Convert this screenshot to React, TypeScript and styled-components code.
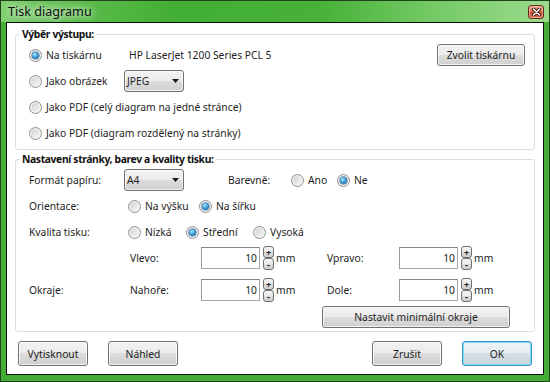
import React from 'react'
import styled, { createGlobalStyle } from 'styled-components'

const GlobalStyle = createGlobalStyle`
  html, body {
    margin: 0;
    padding: 0;
    background: #ffffff;
  }
  body {
    font-family: 'Noto Sans', 'Open Sans', sans-serif;
    font-size: 10.3px;
    color: #1e1e1e;
  }
  * {
    box-sizing: border-box;
  }
`

const Window = styled.div`
  width: 550px;
  height: 382px;
  display: flex;
  flex-direction: column;
  border: 1px solid #1f4319;
  background: #44ad35;
  padding: 0 5px 6px;
`

const TitleBar = styled.div`
  height: 21px;
  margin: 0 -5px;
  padding: 0 5px 0 7px;
  display: flex;
  align-items: flex-start;
  background: linear-gradient(
    to right,
    #7fcf70 0%,
    #5cbc4c 14%,
    #43ae34 32%,
    #47b138 58%,
    #72c963 78%,
    #9cdb8e 100%
  );
`

const Title = styled.span`
  font-size: 12.6px;
  line-height: 22px;
  color: #101010;
  text-shadow: 0 0 6px rgba(255, 255, 255, 0.95), 0 0 10px rgba(255, 255, 255, 0.7);
`

const CloseButton = styled.span`
  margin: 4px 0 0 auto;
  width: 16px;
  height: 14px;
  border: 1px solid #6b2a1a;
  border-radius: 3px;
  background: linear-gradient(#eaa793 0%, #d5755b 48%, #c24b2c 52%, #d4735a 100%);
  box-shadow: inset 0 0 0 1px rgba(255, 220, 210, 0.45);
  display: flex;
  align-items: center;
  justify-content: center;
`

const Client = styled.div`
  flex: 1;
  display: flex;
  flex-direction: column;
  background: #ffffff;
  border: 1px solid #0c0c0c;
  padding: 0 8px;
`

const Group = styled.fieldset<{ $top: number }>`
  margin: ${({ $top }) => $top}px 0 0;
  padding: 0 9px 3px 13px;
  border: 1px solid #d5dfe5;
  border-radius: 3px;
  min-width: 0;
`

const Legend = styled.legend`
  font-weight: bold;
  letter-spacing: -0.35px;
  line-height: 15px;
  padding: 0 2px;
  margin-left: -9px;
  color: #101010;
`

const Row = styled.div<{ $h?: number }>`
  display: flex;
  align-items: center;
  height: ${({ $h }) => $h ?? 26}px;
`

const Label = styled.span<{ $w?: number; $ml?: number }>`
  flex: none;
  width: ${({ $w }) => ($w ? `${$w}px` : 'auto')};
  margin-left: ${({ $ml }) => $ml ?? 0}px;
  white-space: nowrap;
`

const RadioLabel = styled.label<{ $w?: number }>`
  flex: none;
  display: flex;
  align-items: center;
  gap: 4px;
  width: ${({ $w }) => ($w ? `${$w}px` : 'auto')};
  white-space: nowrap;
`

const RadioCircle = styled.span`
  flex: none;
  width: 13px;
  height: 13px;
  border-radius: 50%;
  border: 1px solid #8f9090;
  background: linear-gradient(135deg, #cdd0d1 0%, #e6e7e8 55%, #f8f8f8 100%);
  box-shadow: inset 0 0 0 1px #f6f6f6;
  display: flex;
  align-items: center;
  justify-content: center;
`

const RadioDot = styled.span`
  width: 7px;
  height: 7px;
  border-radius: 50%;
  background: radial-gradient(circle at 40% 35%, #b4ecfd 0%, #3b9ad6 45%, #1d5f96 100%);
  box-shadow: 0 0 0 0.5px #2a5f8a;
`

const Combo = styled.div`
  flex: none;
  width: 60px;
  height: 22px;
  border: 1px solid #707070;
  border-radius: 3px;
  background: linear-gradient(#f2f2f2 0%, #ebebeb 50%, #dddddd 50%, #cfcfcf 100%);
  box-shadow: inset 0 0 0 1px rgba(255, 255, 255, 0.7);
  display: flex;
  align-items: center;
  justify-content: space-between;
  padding: 0 4px 0 2px;
`

const Button = styled.button<{ $w: number; $h: number; $focused?: boolean }>`
  flex: none;
  width: ${({ $w }) => $w}px;
  height: ${({ $h }) => $h}px;
  padding: 0;
  font: inherit;
  color: #1e1e1e;
  border: 1px solid ${({ $focused }) => ($focused ? '#3c8fc4' : '#707070')};
  border-radius: 3px;
  background: ${({ $focused }) =>
    $focused
      ? 'linear-gradient(#eef4f7 0%, #e6eef2 50%, #d5e0e6 50%, #c8d5dc 100%)'
      : 'linear-gradient(#f2f2f2 0%, #ebebeb 50%, #dddddd 50%, #cfcfcf 100%)'};
  box-shadow: inset 0 0 0 1px
    ${({ $focused }) => ($focused ? '#7fdcf8' : 'rgba(255, 255, 255, 0.75)')};
`

const PrinterName = styled.span`
  white-space: nowrap;
`

const Spacer = styled.span`
  flex: 1;
`

const MarginGrid = styled.div`
  display: grid;
  grid-template-columns: 101px 71px 126px 72px auto;
  grid-template-rows: 26px 26px;
  row-gap: 6px;
  align-items: center;
`

const Field = styled.div`
  display: flex;
  align-items: center;
`

const TextBox = styled.div`
  width: 59px;
  height: 22px;
  border: 1px solid #a3a3a3;
  border-top-color: #858585;
  border-left-color: #9a9a9a;
  background: #ffffff;
  display: flex;
  align-items: center;
  justify-content: flex-end;
  padding-right: 2px;
`

const Spin = styled.div`
  display: flex;
  flex-direction: column;
  margin: 0 2px 0 3px;
`

const SpinButton = styled.span`
  width: 11px;
  height: 12px;
  border: 1px solid #707070;
  border-radius: 3px;
  background: linear-gradient(#f4f4f4 0%, #ebebeb 50%, #dcdcdc 50%, #d0d0d0 100%);
  display: flex;
  align-items: center;
  justify-content: center;
  overflow: hidden;
  font-size: 9px;
  font-weight: bold;
  line-height: 9px;
  color: #202020;
`

const ButtonRow = styled.div`
  display: flex;
  justify-content: flex-end;
  margin-top: 3px;
  padding-right: 15px;
`

const Footer = styled.div`
  display: flex;
  gap: 20px;
  margin-top: 9px;
  padding: 0 3px;
`

const FooterRight = styled.div`
  display: flex;
  gap: 20px;
  margin-left: auto;
`

function Radio({ label, checked, width }: { label: string; checked?: boolean; width?: number }) {
  return (
    <RadioLabel $w={width}>
      <RadioCircle>{checked && <RadioDot />}</RadioCircle>
      {label}
    </RadioLabel>
  )
}

function ComboBox({ value }: { value: string }) {
  return (
    <Combo>
      <span>{value}</span>
      <svg width="7" height="4" viewBox="0 0 7 4">
        <path d="M0 0 H7 L3.5 4 Z" fill="#1a1a1a" />
      </svg>
    </Combo>
  )
}

function MarginField({ value }: { value: string }) {
  return (
    <Field>
      <TextBox>{value}</TextBox>
      <Spin>
        <SpinButton>+</SpinButton>
        <SpinButton>-</SpinButton>
      </Spin>
      <span>mm</span>
    </Field>
  )
}

export default function App() {
  return (
    <>
      <GlobalStyle />
      <Window>
        <TitleBar>
          <Title>Tisk diagramu</Title>
          <CloseButton>
            <svg width="9" height="8" viewBox="0 0 9 8">
              <path d="M1.5 1 L7.5 7 M7.5 1 L1.5 7" stroke="#3a1208" strokeWidth="3.4" strokeLinecap="round" />
              <path d="M1.5 1 L7.5 7 M7.5 1 L1.5 7" stroke="#ffffff" strokeWidth="1.6" strokeLinecap="round" />
            </svg>
          </CloseButton>
        </TitleBar>
        <Client>
          <Group $top={4}>
            <Legend>Výběr výstupu:</Legend>
            <Row>
              <Radio label="Na tiskárnu" checked width={100} />
              <PrinterName>HP LaserJet 1200 Series PCL 5</PrinterName>
              <Spacer />
              <Button $w={88} $h={22}>Zvolit tiskárnu</Button>
            </Row>
            <Row>
              <Radio label="Jako obrázek" width={95} />
              <ComboBox value="JPEG" />
            </Row>
            <Row>
              <Radio label="Jako PDF (celý diagram na jedné stránce)" />
            </Row>
            <Row>
              <Radio label="Jako PDF (diagram rozdělený na stránky)" />
            </Row>
          </Group>
          <Group $top={2}>
            <Legend>Nastavení stránky, barev a kvality tisku:</Legend>
            <Row>
              <Label $w={95}>Formát papíru:</Label>
              <ComboBox value="A4" />
              <Label $w={63} $ml={44}>Barevně:</Label>
              <Radio label="Ano" width={46} />
              <Radio label="Ne" checked />
            </Row>
            <Row>
              <Label $w={99}>Orientace:</Label>
              <Radio label="Na výšku" width={71} />
              <Radio label="Na šířku" checked />
            </Row>
            <Row>
              <Label $w={99}>Kvalita tisku:</Label>
              <Radio label="Nízká" width={58} />
              <Radio label="Střední" checked width={67} />
              <Radio label="Vysoká" />
            </Row>
            <MarginGrid>
              <span />
              <Label>Vlevo:</Label>
              <MarginField value="10" />
              <Label>Vpravo:</Label>
              <MarginField value="10" />
              <Label>Okraje:</Label>
              <Label>Nahoře:</Label>
              <MarginField value="10" />
              <Label>Dole:</Label>
              <MarginField value="10" />
            </MarginGrid>
            <ButtonRow>
              <Button $w={188} $h={22}>Nastavit minimální okraje</Button>
            </ButtonRow>
          </Group>
          <Footer>
            <Button $w={70} $h={25}>Vytisknout</Button>
            <Button $w={70} $h={25}>Náhled</Button>
            <FooterRight>
              <Button $w={70} $h={25}>Zrušit</Button>
              <Button $w={70} $h={25} $focused>OK</Button>
            </FooterRight>
          </Footer>
        </Client>
      </Window>
    </>
  )
}
